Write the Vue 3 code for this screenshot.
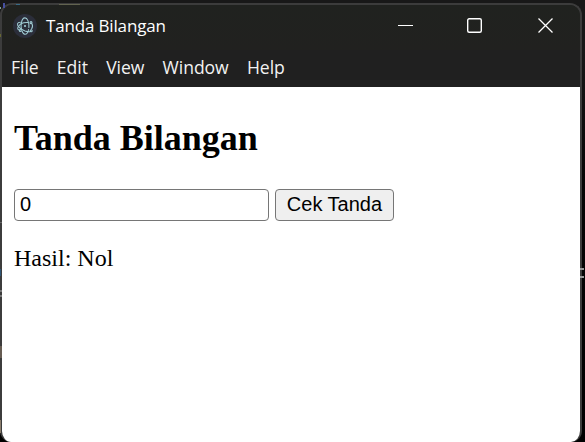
<script setup>
import { ref } from 'vue'

const menus = ['File', 'Edit', 'View', 'Window', 'Help']
const bilangan = ref('0')
const hasil = ref('Nol')

function cekTanda() {
  const n = Number(bilangan.value)
  hasil.value = n > 0 ? 'Positif' : n < 0 ? 'Negatif' : 'Nol'
}
</script>

<template>
  <div class="desktop">
    <div class="app-window">
      <header class="titlebar">
        <svg class="logo" width="24" height="24" viewBox="0 0 24 24">
          <circle cx="12" cy="12" r="12" fill="#2b2e3a" />
          <g fill="none" stroke="#9fcbd3" stroke-width="1.05" stroke-linecap="round">
            <path d="M15 8.600C11 8.200 7 9.800 5.300 12.700C4.200 14.300 4.600 15.600 6.300 16.100" />
            <path d="M7.300 8.200C5.700 8.200 4.700 8.900 4.500 9.800C4.100 12 7.500 15.300 12 17C14 17.700 15.500 17.900 16.700 17.800" />
            <path d="M9.100 17.200C9.900 19.200 11 20.300 12.100 20.300C13.600 20.300 15 18.400 15.600 15.500" />
            <path d="M15.900 13.500C16.200 8 14.300 3.900 12 3.900C10.300 3.900 8.800 6.200 8.300 9.400C7.900 11.500 8 13.500 8.400 15" />
            <path d="M18.900 9.800C20 11.500 19.500 13.500 18.600 15" />
            <circle cx="18" cy="8.600" r="1" />
            <circle cx="7.300" cy="16.500" r="1" />
            <circle cx="18.200" cy="16.700" r="1" />
          </g>
          <circle cx="12" cy="12" r="1.100" fill="#9fcbd3" />
        </svg>
        <span class="title">Tanda Bilangan</span>
        <svg class="controls" width="156" height="16" viewBox="0 0 156 16" fill="none">
          <path d="M0 7.500H15" stroke="#fff" />
          <rect x="69.700" y="0.700" width="13.600" height="13.600" rx="1.500" stroke="#fff" stroke-width="1.400" />
          <path d="M140.500 0.500L154.500 14.500M154.500 0.500L140.500 14.500" stroke="#fff" stroke-width="1.300" />
        </svg>
      </header>
      <nav class="menubar">
        <span v-for="m in menus" :key="m">{{ m }}</span>
      </nav>
      <main class="content">
        <h2>Tanda Bilangan</h2>
        <div class="row">
          <input v-model="bilangan" type="text" />
          <button @click="cekTanda">Cek Tanda</button>
        </div>
        <p>Hasil: {{ hasil }}</p>
      </main>
    </div>
    <i v-for="n in 13" :key="n" :class="['fleck', 'f' + n]"></i>
  </div>
</template>

<style>
body { margin: 0; overflow: hidden; background: #181818; }
</style>

<style scoped>
.desktop {
  position: relative;
  box-sizing: border-box;
  width: 585px;
  height: 442px;
  padding-top: 3px;
  overflow: hidden;
  background: linear-gradient(#181818 0, #181818 50px, #060606 180px, #000 100%);
}
.app-window {
  box-sizing: border-box;
  display: flex;
  flex-direction: column;
  width: 582px;
  height: 439px;
  border: 2px solid #3c3c3c;
  border-bottom: 0;
  border-radius: 12px 12px 11px 11px;
  overflow: hidden;
  background: #202020;
}
.titlebar {
  display: flex;
  align-items: center;
  height: 45px;
  flex: none;
  box-sizing: border-box;
  padding: 0 26px 4px 11px;
  background: linear-gradient(#20221f, #21211f);
}
.logo { flex: none; }
.title {
  margin-left: 9px;
  color: #fff;
  font: 17px/24px "Open Sans", sans-serif;
  letter-spacing: -0.160px;
  white-space: nowrap;
}
.controls { margin-left: auto; flex: none; }
.menubar {
  box-sizing: border-box;
  display: flex;
  align-items: center;
  height: 37px;
  flex: none;
  padding: 0 0 3px 9px;
  gap: 18.300px;
  background: #202020;
  color: #f2f2f2;
  font: 17.600px/24px "Open Sans", sans-serif;
  letter-spacing: -0.070px;
}
.content {
  flex: 1;
  padding: 0 12px;
  background: #fff;
  color: #000;
  font: 24px/27px "Liberation Serif", serif;
}
h2 {
  margin: 31px 0 30px;
  font-size: 36px;
  line-height: 41px;
  font-weight: bold;
}
.row { display: flex; gap: 6px; }
input, button {
  box-sizing: border-box;
  height: 32px;
  margin: 0;
  border: 1px solid #767676;
  border-radius: 4px;
  color: #000;
  font: 20px/23px "Liberation Sans", sans-serif;
}
input { width: 255px; padding: 0 5px 2px; background: #fff; }
button { width: 119px; padding: 0 0 1px; background: #efefef; white-space: nowrap; }
p { margin: 24px 0 0; }

/* Bits of the editor behind the window that show at its edges */
.fleck { position: absolute; left: 0; width: 2px; background: #777; }
.f1 { top: 7px; width: 1px; height: 2px; background: #81a19a; }
.f2 { left: 3px; top: 3px; height: 5px; background: #4650a0; }
.f3 { left: 16px; top: 4px; width: 4px; height: 1px; background: #386a85; }
.f4 { left: 59px; top: 4px; width: 21px; height: 1px; background: #62634f; }
.f5 { top: 34px; width: 1px; height: 3px; background: #666633; }
.f6 { left: 580px; top: 268px; width: 4px; height: 2px; background: #999; }
.f7 { left: 580px; top: 276px; width: 4px; height: 2px; background: #999; }
.f8 { top: 222px; height: 1px; background: #666; }
.f9 { top: 269px; width: 1px; height: 7px; background: #2f5575; }
.f10 { top: 290px; height: 2px; }
.f11 { top: 295px; height: 2px; }
.f12 { top: 346px; height: 12px; background: #665c52; }
.f13 { top: 420px; width: 1px; height: 13px; background: #8a7d6d; }
</style>
